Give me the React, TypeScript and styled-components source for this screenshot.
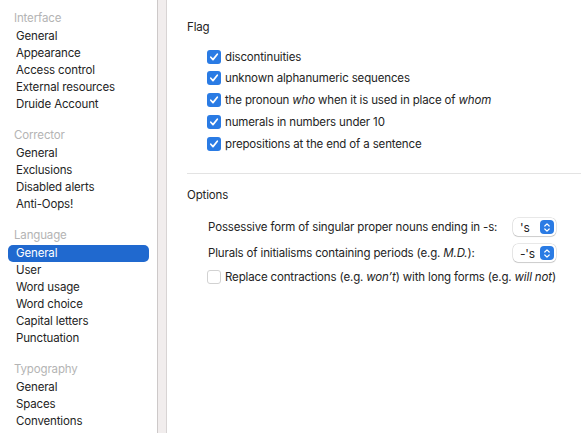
import React from "react";
import styled, { createGlobalStyle } from "styled-components";

const Global = createGlobalStyle`
  html, body { margin: 0; padding: 0; background: #fff; }
  body {
    font-family: Inter, "Noto Sans", sans-serif;
    font-size: 11.5px;
    letter-spacing: -0.15px;
    color: #242424;
  }
  #root { height: 433px; }
`;

const Shell = styled.div`
  display: flex;
  width: 581px;
  height: 433px;
  overflow: hidden;
`;

const Sidebar = styled.nav`
  width: 157px;
  flex: none;
  padding: 10px 8px 0 8px;
  box-sizing: border-box;
  display: flex;
  flex-direction: column;
`;

const Divider = styled.div`
  width: 8px;
  flex: none;
  background: #f1eded;
  border-left: 1px solid #cdc9c9;
  border-right: 1px solid #d8d4d4;
`;

const Group = styled.div`
  display: flex;
  flex-direction: column;
  margin-bottom: 14px;
`;

const GroupTitle = styled.div`
  color: #b4b4b4;
  height: 17px;
  line-height: 17px;
  padding-left: 6px;
  margin-bottom: 1px;
`;

const Item = styled.div<{ $active?: boolean }>`
  height: 17px;
  line-height: 17px;
  padding-left: 8px;
  border-radius: 5px;
  color: ${(p) => (p.$active ? "#fff" : "#242424")};
  background: ${(p) => (p.$active ? "#2069cf" : "transparent")};
`;

const Main = styled.main`
  flex: 1;
  padding: 19px 0 0 20px;
  display: flex;
  flex-direction: column;
`;

const SectionTitle = styled.div`
  height: 17px;
  line-height: 17px;
`;

const CheckList = styled.div`
  display: flex;
  flex-direction: column;
  gap: 4.75px;
  padding: 12px 0 0 20px;
`;

const CheckRow = styled.label<{ $indent?: number; $top?: number }>`
  display: flex;
  align-items: center;
  height: 17px;
  gap: 4px;
  white-space: nowrap;
  padding-left: ${(p) => p.$indent ?? 0}px;
  margin-top: ${(p) => p.$top ?? 0}px;
`;

const Box = styled.span<{ $checked?: boolean }>`
  width: 14px;
  height: 14px;
  box-sizing: border-box;
  border-radius: 3px;
  flex: none;
  display: flex;
  align-items: center;
  justify-content: center;
  background: ${(p) => (p.$checked ? "#2a7be4" : "#fff")};
  border: ${(p) => (p.$checked ? "none" : "1px solid #d2d2d2")};
`;

const Rule = styled.hr`
  border: none;
  border-top: 1px solid #e3e3e3;
  margin: 21px 0 0 0;
  height: 0;
`;

const OptionRows = styled.div`
  display: flex;
  flex-direction: column;
  padding: 13px 0 0 0;
`;

const OptionsTitle = styled(SectionTitle)`
  margin-bottom: 10px;
`;

const SelectRow = styled.div`
  display: flex;
  align-items: center;
  height: 26px;
  padding-left: 21px;
`;

const SelectLabel = styled.span`
  width: 305px;
  flex: none;
  white-space: nowrap;
`;

const Select = styled.div`
  width: 43px;
  height: 18px;
  box-sizing: border-box;
  border-radius: 5px;
  background: #fff;
  box-shadow: 0 0 0 0.5px rgba(0, 0, 0, 0.18), 0 1px 1px rgba(0, 0, 0, 0.12);
  display: flex;
  align-items: center;
  justify-content: space-between;
  padding: 0 2px 0 7px;
  font-size: 12px;
`;

const Stepper = styled.span`
  width: 14px;
  height: 14px;
  border-radius: 4px;
  background: #2a7be4;
  display: flex;
  align-items: center;
  justify-content: center;
`;

const Check = () => (
  <svg width="10" height="10" viewBox="0 0 10 10">
    <path d="M1.8 5.2 L4 7.6 L8.3 2.2" fill="none" stroke="#fff" strokeWidth="1.7" strokeLinecap="round" strokeLinejoin="round" />
  </svg>
);

const Chevrons = () => (
  <svg width="8" height="11" viewBox="0 0 8 11">
    <path d="M1.8 4 L4 1.8 L6.2 4 M1.8 7 L4 9.2 L6.2 7" fill="none" stroke="#fff" strokeWidth="1.2" strokeLinecap="round" strokeLinejoin="round" />
  </svg>
);

const groups: { title: string; items: string[]; active?: number }[] = [
  { title: "Interface", items: ["General", "Appearance", "Access control", "External resources", "Druide Account"] },
  { title: "Corrector", items: ["General", "Exclusions", "Disabled alerts", "Anti-Oops!"] },
  { title: "Language", items: ["General", "User", "Word usage", "Word choice", "Capital letters", "Punctuation"], active: 0 },
  { title: "Typography", items: ["General", "Spaces", "Conventions"] },
];

const flags: React.ReactNode[] = [
  "discontinuities",
  "unknown alphanumeric sequences",
  <>the pronoun <i>who</i> when it is used in place of <i>whom</i></>,
  "numerals in numbers under 10",
  "prepositions at the end of a sentence",
];

export default function App() {
  return (
    <>
      <Global />
      <Shell>
        <Sidebar>
          {groups.map((g) => (
            <Group key={g.title}>
              <GroupTitle>{g.title}</GroupTitle>
              {g.items.map((it, i) => (
                <Item key={it + i} $active={g.active === i}>{it}</Item>
              ))}
            </Group>
          ))}
        </Sidebar>
        <Divider />
        <Main>
          <SectionTitle>Flag</SectionTitle>
          <CheckList>
            {flags.map((f, i) => (
              <CheckRow key={i}>
                <Box $checked><Check /></Box>
                <span>{f}</span>
              </CheckRow>
            ))}
          </CheckList>
          <Rule />
          <OptionRows>
            <OptionsTitle>Options</OptionsTitle>
            <SelectRow>
              <SelectLabel>Possessive form of singular proper nouns ending in -s:</SelectLabel>
              <Select><span>'s</span><Stepper><Chevrons /></Stepper></Select>
            </SelectRow>
            <SelectRow>
              <SelectLabel>Plurals of initialisms containing periods (e.g. <i>M.D.</i>):</SelectLabel>
              <Select><span>-'s</span><Stepper><Chevrons /></Stepper></Select>
            </SelectRow>
            <CheckRow $indent={20} $top={2}>
              <Box />
              <span>Replace contractions (e.g. <i>won’t</i>) with long forms (e.g. <i>will not</i>)</span>
            </CheckRow>
          </OptionRows>
        </Main>
      </Shell>
    </>
  );
}
